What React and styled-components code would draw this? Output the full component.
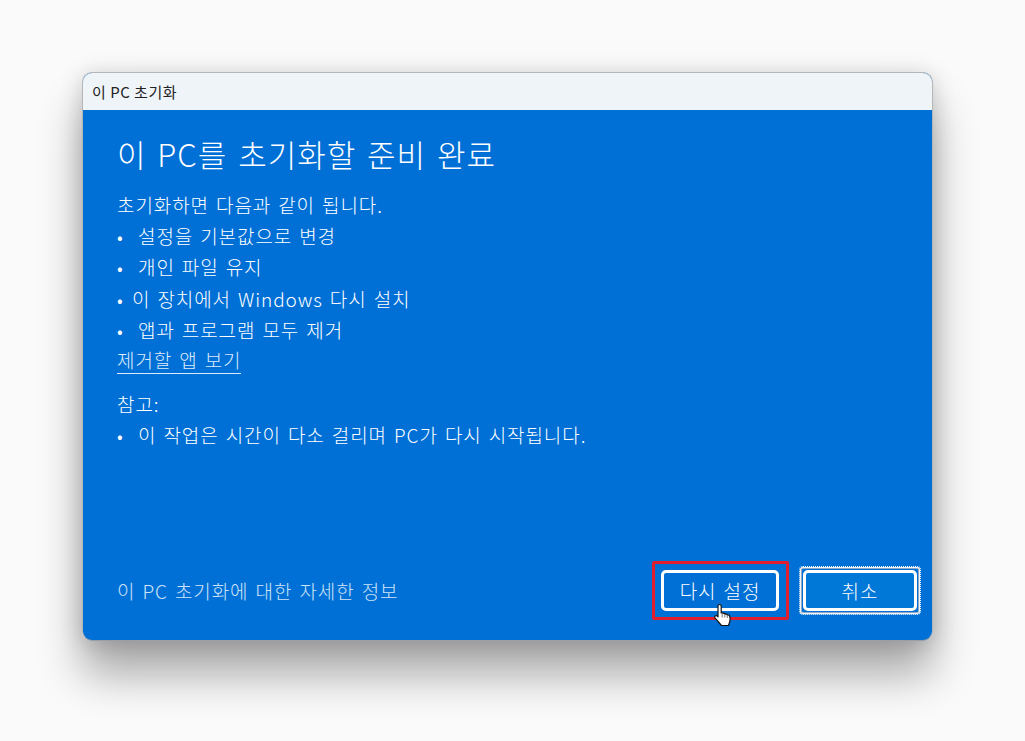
import React from "react";
import styled, { createGlobalStyle } from "styled-components";

const GlobalStyle = createGlobalStyle`
  html, body {
    margin: 0;
    padding: 0;
    background: #fafafa;
  }
  body {
    font-family: "Noto Sans CJK KR", "Noto Sans", sans-serif;
    overflow: hidden;
  }
`;

const Page = styled.div`
  width: 1025px;
  height: 741px;
  padding: 72px 0 0 82px;
  box-sizing: border-box;
  background: #fafafa;
`;

const WindowShadow = styled.div`
  width: 851px;
  border-radius: 10px;
  box-shadow: 0 34px 44px rgba(0, 0, 0, 0.32), 0 2px 22px rgba(0, 0, 0, 0.17);
`;

const Window = styled.div`
  width: 851px;
  height: 569px;
  box-sizing: border-box;
  display: flex;
  flex-direction: column;
  border-radius: 10px;
  overflow: hidden;
  border: 1px solid #b4b6b8;
  border-bottom-color: #9a9fa6;
  background: #0070d6;
`;

const TitleBar = styled.div`
  height: 37px;
  flex: none;
  display: flex;
  align-items: center;
  padding-left: 9px;
  background: #eff4f9;
  color: #222;
  font-size: 15px;
  letter-spacing: 0.5px;
`;

const Content = styled.div`
  flex: 1;
  display: flex;
  flex-direction: column;
  padding: 20px 15px 29px 34px;
  color: #fff;
`;

const Heading = styled.h1`
  margin: 0 0 11px;
  font-size: 31px;
  line-height: 48px;
  font-weight: 300;
  letter-spacing: 1px;
  word-spacing: 3px;
`;

const Line = styled.div`
  height: 31.2px;
  font-size: 19px;
  line-height: 31.2px;
  font-weight: 300;
  letter-spacing: 0.9px;
  word-spacing: 2px;
  white-space: nowrap;
`;

const Bullet = styled.span`
  display: inline-block;
  width: ${(p) => (p.$tight ? "15px" : "21px")};
  letter-spacing: 0;
  font-size: 18px;
`;

const ViewLink = styled.a`
  display: block;
  width: fit-content;
  font-size: 19px;
  line-height: 27px;
  font-weight: 300;
  letter-spacing: 0.9px;
  word-spacing: 2px;
  color: #dcebfa;
  border-bottom: 1px solid #dcebfa;
  margin-top: 1px;
`;

const Note = styled.div`
  margin-top: 14px;
`;

const Footer = styled.div`
  margin-top: auto;
  display: flex;
  align-items: center;
  justify-content: space-between;
`;

const MoreInfo = styled.a`
  font-size: 19px;
  font-weight: 300;
  letter-spacing: 0.9px;
  word-spacing: 2px;
  color: #cfe3f7;
`;

const Actions = styled.div`
  display: flex;
  align-items: center;
  gap: 24px;
`;

const ButtonWrap = styled.div`
  position: relative;
`;

const Button = styled.button`
  display: block;
  width: ${(p) => p.$width}px;
  height: 41px;
  box-sizing: border-box;
  border: 3px solid #fff;
  border-radius: 5px;
  background: ${(p) => (p.$focused ? "#0078d7" : "#0070d6")};
  color: #fff;
  font-family: inherit;
  font-size: 19px;
  font-weight: 300;
  letter-spacing: 0.9px;
  word-spacing: 2px;
  padding: 0;
`;

const FocusRing = styled.span`
  position: absolute;
  inset: -4px;
  border: 1px dotted #fff;
  border-radius: 4px;
  box-shadow: inset 0 0 0 1px #f2f5f8, inset 0 0 0 2px #8fa9c4;
  pointer-events: none;
`;

const Highlight = styled.span`
  position: absolute;
  inset: -9px -10px -9px -9px;
  border: 3px solid #e0202f;
  border-radius: 2px;
  pointer-events: none;
`;

const Cursor = styled.svg`
  position: absolute;
  left: 53px;
  top: 33px;
  width: 18px;
  height: 24px;
  pointer-events: none;
`;

export default function App() {
  return (
    <Page>
      <GlobalStyle />
      <WindowShadow>
        <Window>
          <TitleBar>이 PC 초기화</TitleBar>
          <Content>
            <Heading>이 PC를 초기화할 준비 완료</Heading>
            <Line>초기화하면 다음과 같이 됩니다.</Line>
            <Line><Bullet>•</Bullet>설정을 기본값으로 변경</Line>
            <Line><Bullet>•</Bullet>개인 파일 유지</Line>
            <Line><Bullet $tight>•</Bullet>이 장치에서 Windows 다시 설치</Line>
            <Line><Bullet>•</Bullet>앱과 프로그램 모두 제거</Line>
            <ViewLink>제거할 앱 보기</ViewLink>
            <Note>
              <Line>참고:</Line>
              <Line><Bullet>•</Bullet>이 작업은 시간이 다소 걸리며 PC가 다시 시작됩니다.</Line>
            </Note>
            <Footer>
              <MoreInfo>이 PC 초기화에 대한 자세한 정보</MoreInfo>
              <Actions>
                <ButtonWrap>
                  <Highlight />
                  <Button $width={118}>다시 설정</Button>
                  <Cursor viewBox="0 0 18 24">
                    <path
                      d="M5.500 1.500c1 0 1.700.7 1.700 1.700v6.800l1-.2c.7-.1 1.300.2 1.600.8.7-.3 1.500-.1 1.900.6.7-.3 1.500 0 1.800.7.9-.2 2 .4 2.300 1.600.4 2 .4 4.300-.4 6.200L14.500 22.500H7.500L1.200 15.200c-.7-.9-.6-1.800 0-2.300.7-.5 1.600-.3 2.200.3l.6.7V3.200c0-1 .8-1.700 1.500-1.700z"
                      fill="#fff"
                      stroke="#111"
                      strokeWidth="1.200"
                      strokeLinejoin="round"
                    />
                    <path d="M8.200 10.500v4M10.800 11v3.500M13.300 12v3" stroke="#555" strokeWidth="0.800" fill="none" />
                  </Cursor>
                </ButtonWrap>
                <ButtonWrap>
                  <FocusRing />
                  <Button $width={114} $focused>취소</Button>
                </ButtonWrap>
              </Actions>
            </Footer>
          </Content>
        </Window>
      </WindowShadow>
    </Page>
  );
}
